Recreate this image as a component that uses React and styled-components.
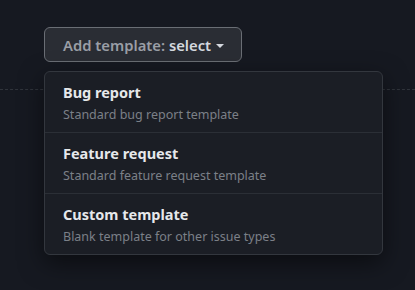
import React from 'react';
import styled, { createGlobalStyle } from 'styled-components';

const GlobalStyle = createGlobalStyle`
  html, body {
    margin: 0;
    padding: 0;
    background: #161921;
    font-family: "Noto Sans", "Open Sans", sans-serif;
  }
`;

const Page = styled.div`
  position: relative;
  width: 415px;
  height: 290px;
  overflow: hidden;
  background: #161921;
`;

const Toolbar = styled.div`
  padding: 27px 0 0 44px;
`;

const SelectButton = styled.button`
  display: inline-flex;
  align-items: center;
  gap: 5px;
  height: 35px;
  padding: 0 17px 0 18px;
  background: #2a2d34;
  border: 1px solid #6a6e75;
  border-radius: 6px;
  font-family: inherit;
  font-size: 14.8px;
  font-weight: 600;
  color: #9a9ea6;
  cursor: pointer;

  b {
    color: #d4d8de;
    font-weight: 600;
  }
`;

const Caret = styled.span`
  width: 0;
  height: 0;
  border-left: 4px solid transparent;
  border-right: 4px solid transparent;
  border-top: 4px solid #d4d8de;
  margin-top: 2px;
`;

const DashedRule = styled.hr`
  margin: 27px 0 0;
  border: 0;
  border-top: 1px dashed #30343b;
`;

const Menu = styled.ul`
  position: absolute;
  top: 71px;
  left: 44px;
  width: 337px;
  margin: 0;
  padding: 0;
  list-style: none;
  background: #1b1e25;
  border: 1px solid #33373e;
  border-radius: 6px;
  box-shadow: 0 8px 24px rgba(0, 0, 0, 0.5);
  overflow: hidden;
`;

const Item = styled.li`
  padding: 10px 18px 8px;
  border-top: ${(p) => (p.first ? 'none' : '1px solid #2b2f36')};
  height: ${(p) => (p.first ? '60px' : '61px')};
  box-sizing: border-box;
`;

const Title = styled.div`
  font-size: 14.5px;
  font-weight: 700;
  color: #e6e8eb;
  line-height: 20px;
`;

const Desc = styled.div`
  font-size: 12.5px;
  color: #7b8088;
  line-height: 18px;
  margin-top: 4px;
`;

const templates = [
  { title: 'Bug report', desc: 'Standard bug report template' },
  { title: 'Feature request', desc: 'Standard feature request template' },
  { title: 'Custom template', desc: 'Blank template for other issue types' },
];

export default function App() {
  return (
    <Page>
      <GlobalStyle />
      <Toolbar>
        <SelectButton>
          <span>
            Add template: <b>select</b>
          </span>
          <Caret />
        </SelectButton>
      </Toolbar>
      <DashedRule />
      <Menu>
        {templates.map((t, i) => (
          <Item key={t.title} first={i === 0}>
            <Title>{t.title}</Title>
            <Desc>{t.desc}</Desc>
          </Item>
        ))}
      </Menu>
    </Page>
  );
}
